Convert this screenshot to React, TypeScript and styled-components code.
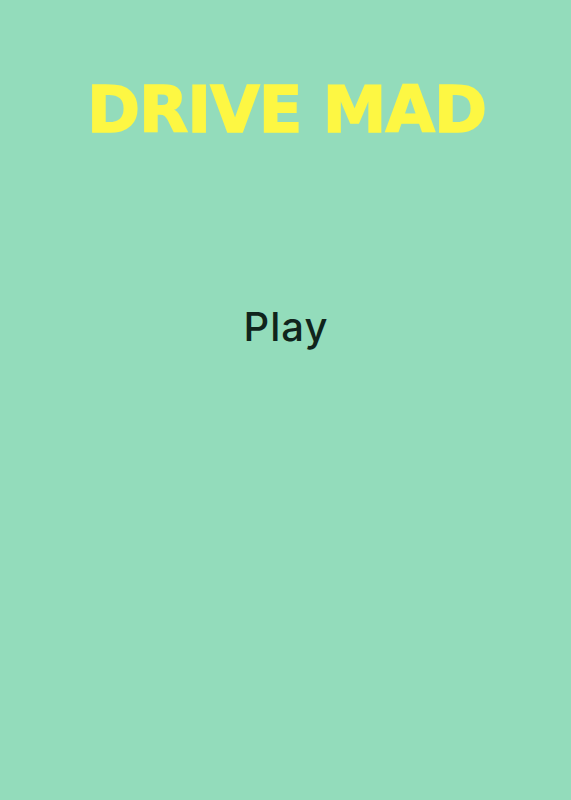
import styled, { createGlobalStyle } from "styled-components";

const GlobalStyle = createGlobalStyle`
  html, body {
    margin: 0;
    padding: 0;
    background: #93dcbb;
  }
`;

const Screen = styled.div`
  width: 571px;
  height: 800px;
  background: #93dcbb;
  display: flex;
  flex-direction: column;
  align-items: center;
`;

const Title = styled.h1`
  margin: 73px 0 0;
  padding-left: 2px;
  font-family: "DejaVu Sans", Lato, sans-serif;
  font-weight: 700;
  font-size: 64px;
  line-height: 74px;
  letter-spacing: -1px;
  color: #fdf743;
  -webkit-text-stroke: 1.5px #fdf743;
`;

const PlayButton = styled.button`
  margin-top: 158px;
  padding: 0 0 0 1px;
  border: none;
  background: transparent;
  font-family: Inter, Roboto, sans-serif;
  font-weight: 500;
  font-size: 40px;
  line-height: 44px;
  letter-spacing: 1px;
  color: #10241c;
  cursor: pointer;
`;

export default function App() {
  return (
    <Screen>
      <GlobalStyle />
      <Title>DRIVE MAD</Title>
      <PlayButton>Play</PlayButton>
    </Screen>
  );
}
